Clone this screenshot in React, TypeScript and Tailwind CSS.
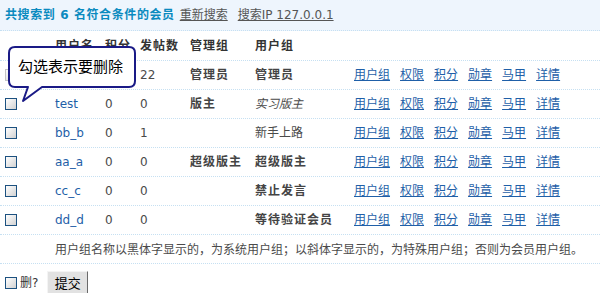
import React from "react";

const font = { fontFamily: '"DejaVu Sans", "Noto Sans CJK SC", sans-serif' };
const cjk = { fontFamily: '"Noto Sans CJK SC", "DejaVu Sans", sans-serif' };

function Box({ disabled }: { disabled?: boolean }) {
  return (
    <span
      className={
        "inline-block w-[12px] h-[12px] border bg-linear-to-br from-white to-[#d2d2d2] " +
        (disabled ? "border-[#c4c4c4]" : "border-[#1c5180]")
      }
    />
  );
}

type Row = {
  name: string;
  credits: string;
  posts: string;
  admin: string;
  group: string;
  groupStyle: "bold" | "italic" | "normal";
  disabled?: boolean;
};

const rows: Row[] = [
  { name: "", credits: "", posts: "22", admin: "管理员", group: "管理员", groupStyle: "bold", disabled: true },
  { name: "test", credits: "0", posts: "0", admin: "版主", group: "实习版主", groupStyle: "italic" },
  { name: "bb_b", credits: "0", posts: "1", admin: "", group: "新手上路", groupStyle: "normal" },
  { name: "aa_a", credits: "0", posts: "0", admin: "超级版主", group: "超级版主", groupStyle: "bold" },
  { name: "cc_c", credits: "0", posts: "0", admin: "", group: "禁止发言", groupStyle: "bold" },
  { name: "dd_d", credits: "0", posts: "0", admin: "", group: "等待验证会员", groupStyle: "bold" },
];

const links = ["用户组", "权限", "积分", "勋章", "马甲", "详情"];

export default function App() {
  return (
    <div className="relative w-[600px] h-[293px] bg-white text-[12px] text-[#4a4a4a] overflow-hidden" style={font}>
      {/* title bar */}
      <div className="h-[31px] bg-[#eef5fd] border-b border-dotted border-[#c6e0f2] flex items-center pl-[5px] gap-[5px]">
        <span className="font-bold text-[#0a8abf] tracking-[0.6px]">共搜索到 6 名符合条件的会员</span>
        <span className="underline text-[#555]">重新搜索</span>
        <span className="underline text-[#555] ml-[5px]">搜索IP 127.0.0.1</span>
      </div>

      {/* header */}
      <div className="h-[30px] border-b border-dotted border-[#c6e0f2] flex items-center font-bold text-[#333] tracking-[1px]">
        <div className="w-[55px]" />
        <div className="w-[50px]">用户名</div>
        <div className="w-[35px]">积分</div>
        <div className="w-[50px]">发帖数</div>
        <div className="w-[65px]">管理组</div>
        <div className="w-[99px]">用户组</div>
      </div>

      {rows.map((r, i) => (
        <div key={i} className="h-[29px] border-b border-dotted border-[#c6e0f2] flex items-center">
          <div className="w-[55px] pl-[5px] flex items-center">
            <Box disabled={r.disabled} />
          </div>
          <div className="w-[50px] text-[#1f5fa8]">{r.name}</div>
          <div className="w-[35px]">{r.credits}</div>
          <div className="w-[50px]">{r.posts}</div>
          <div className="w-[65px] font-bold tracking-[1px] text-[#444]">{r.admin}</div>
          <div
            className={
              "w-[99px] " +
              (r.groupStyle === "bold" ? "font-bold tracking-[1px] text-[#444]" : r.groupStyle === "italic" ? "italic" : "")
            }
          >
            {r.group}
          </div>
          <div className="flex gap-[10px] text-[#1f5fa8]">
            {links.map((l) => (
              <span key={l} className="underline">
                {l}
              </span>
            ))}
          </div>
        </div>
      ))}

      {/* footer note */}
      <div className="h-[29px] border-b border-dotted border-[#c6e0f2] flex items-center pl-[55px]" style={cjk}>
        用户组名称以黑体字显示的，为系统用户组；以斜体字显示的，为特殊用户组；否则为会员用户组。
      </div>

      {/* submit */}
      <div className="flex items-center mt-[7px] pl-[5px]">
        <Box />
        <span className="ml-[3px] text-[#333]">删?</span>
        <button
          className="ml-[9px] w-[41px] h-[23px] bg-[#e2e2e2] border border-t-[#f4f4f4] border-l-[#f4f4f4] border-r-[#6a6a6a] border-b-[#6a6a6a] text-[13px] text-black leading-none"
          style={cjk}
        >
          提交
        </button>
      </div>

      {/* tooltip */}
      <svg className="absolute left-0 top-[44px]" width="140" height="62" viewBox="0 0 140 62">
        <path
          d="M15,3 H129 Q135,3 135,9 V37 Q135,43 129,43 H42 L23,57 L28,43 H15 Q9,43 9,37 V9 Q9,3 15,3 Z"
          fill="white"
          stroke="#1a1a86"
          strokeWidth="2"
          strokeLinejoin="round"
        />
      </svg>
      <div className="absolute left-[18px] top-[55px] text-[15px] leading-[22px] text-black" style={cjk}>
        勾选表示要删除
      </div>
    </div>
  );
}
